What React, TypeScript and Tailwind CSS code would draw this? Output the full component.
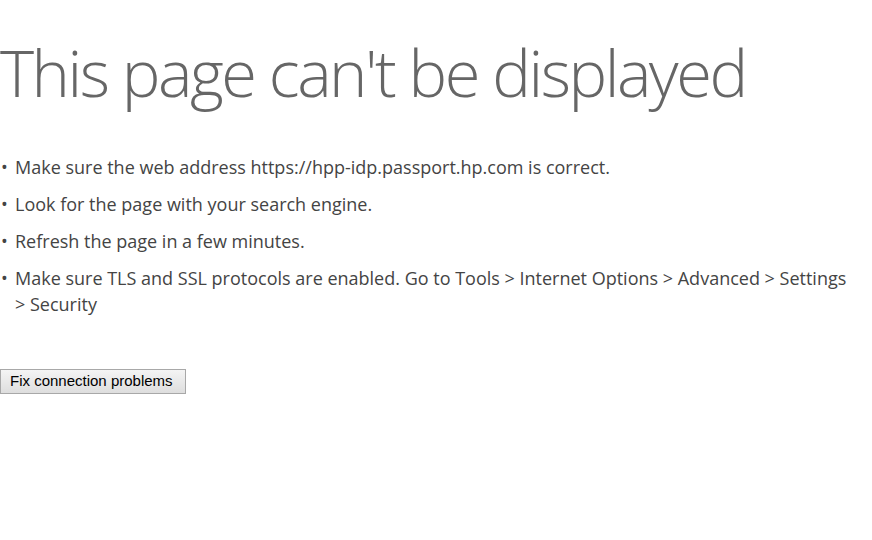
export default function App() {
  const items = [
    "Make sure the web address https://hpp-idp.passport.hp.com is correct.",
    "Look for the page with your search engine.",
    "Refresh the page in a few minutes.",
    "Make sure TLS and SSL protocols are enabled. Go to Tools > Internet Options > Advanced > Settings > Security",
  ];

  return (
    <div className="h-[540px] w-[872px] overflow-hidden bg-white">
      <h1 className="pt-[34px] font-['Open_Sans',sans-serif] text-[65px] font-light leading-[76px] tracking-[-2.5px] text-[#666]">
        This page can't be displayed
      </h1>

      <ul className="mt-[44px] flex flex-col gap-[11px] font-['Open_Sans',sans-serif] text-[18px] leading-[26px] text-[#444]">
        {items.map((t) => (
          <li key={t} className="flex">
            <span className="w-[15px] shrink-0 pl-[1px]">•</span>
            <span className="pr-[20px]">{t}</span>
          </li>
        ))}
      </ul>

      <button className="mt-[52px] h-[25px] w-[186px] border border-[#a8a8a8] bg-gradient-to-b from-[#f4f4f4] to-[#dedede] pl-[9px] text-left font-['Liberation_Sans',Arial,sans-serif] text-[15px] text-black">
        Fix connection problems
      </button>
    </div>
  );
}
